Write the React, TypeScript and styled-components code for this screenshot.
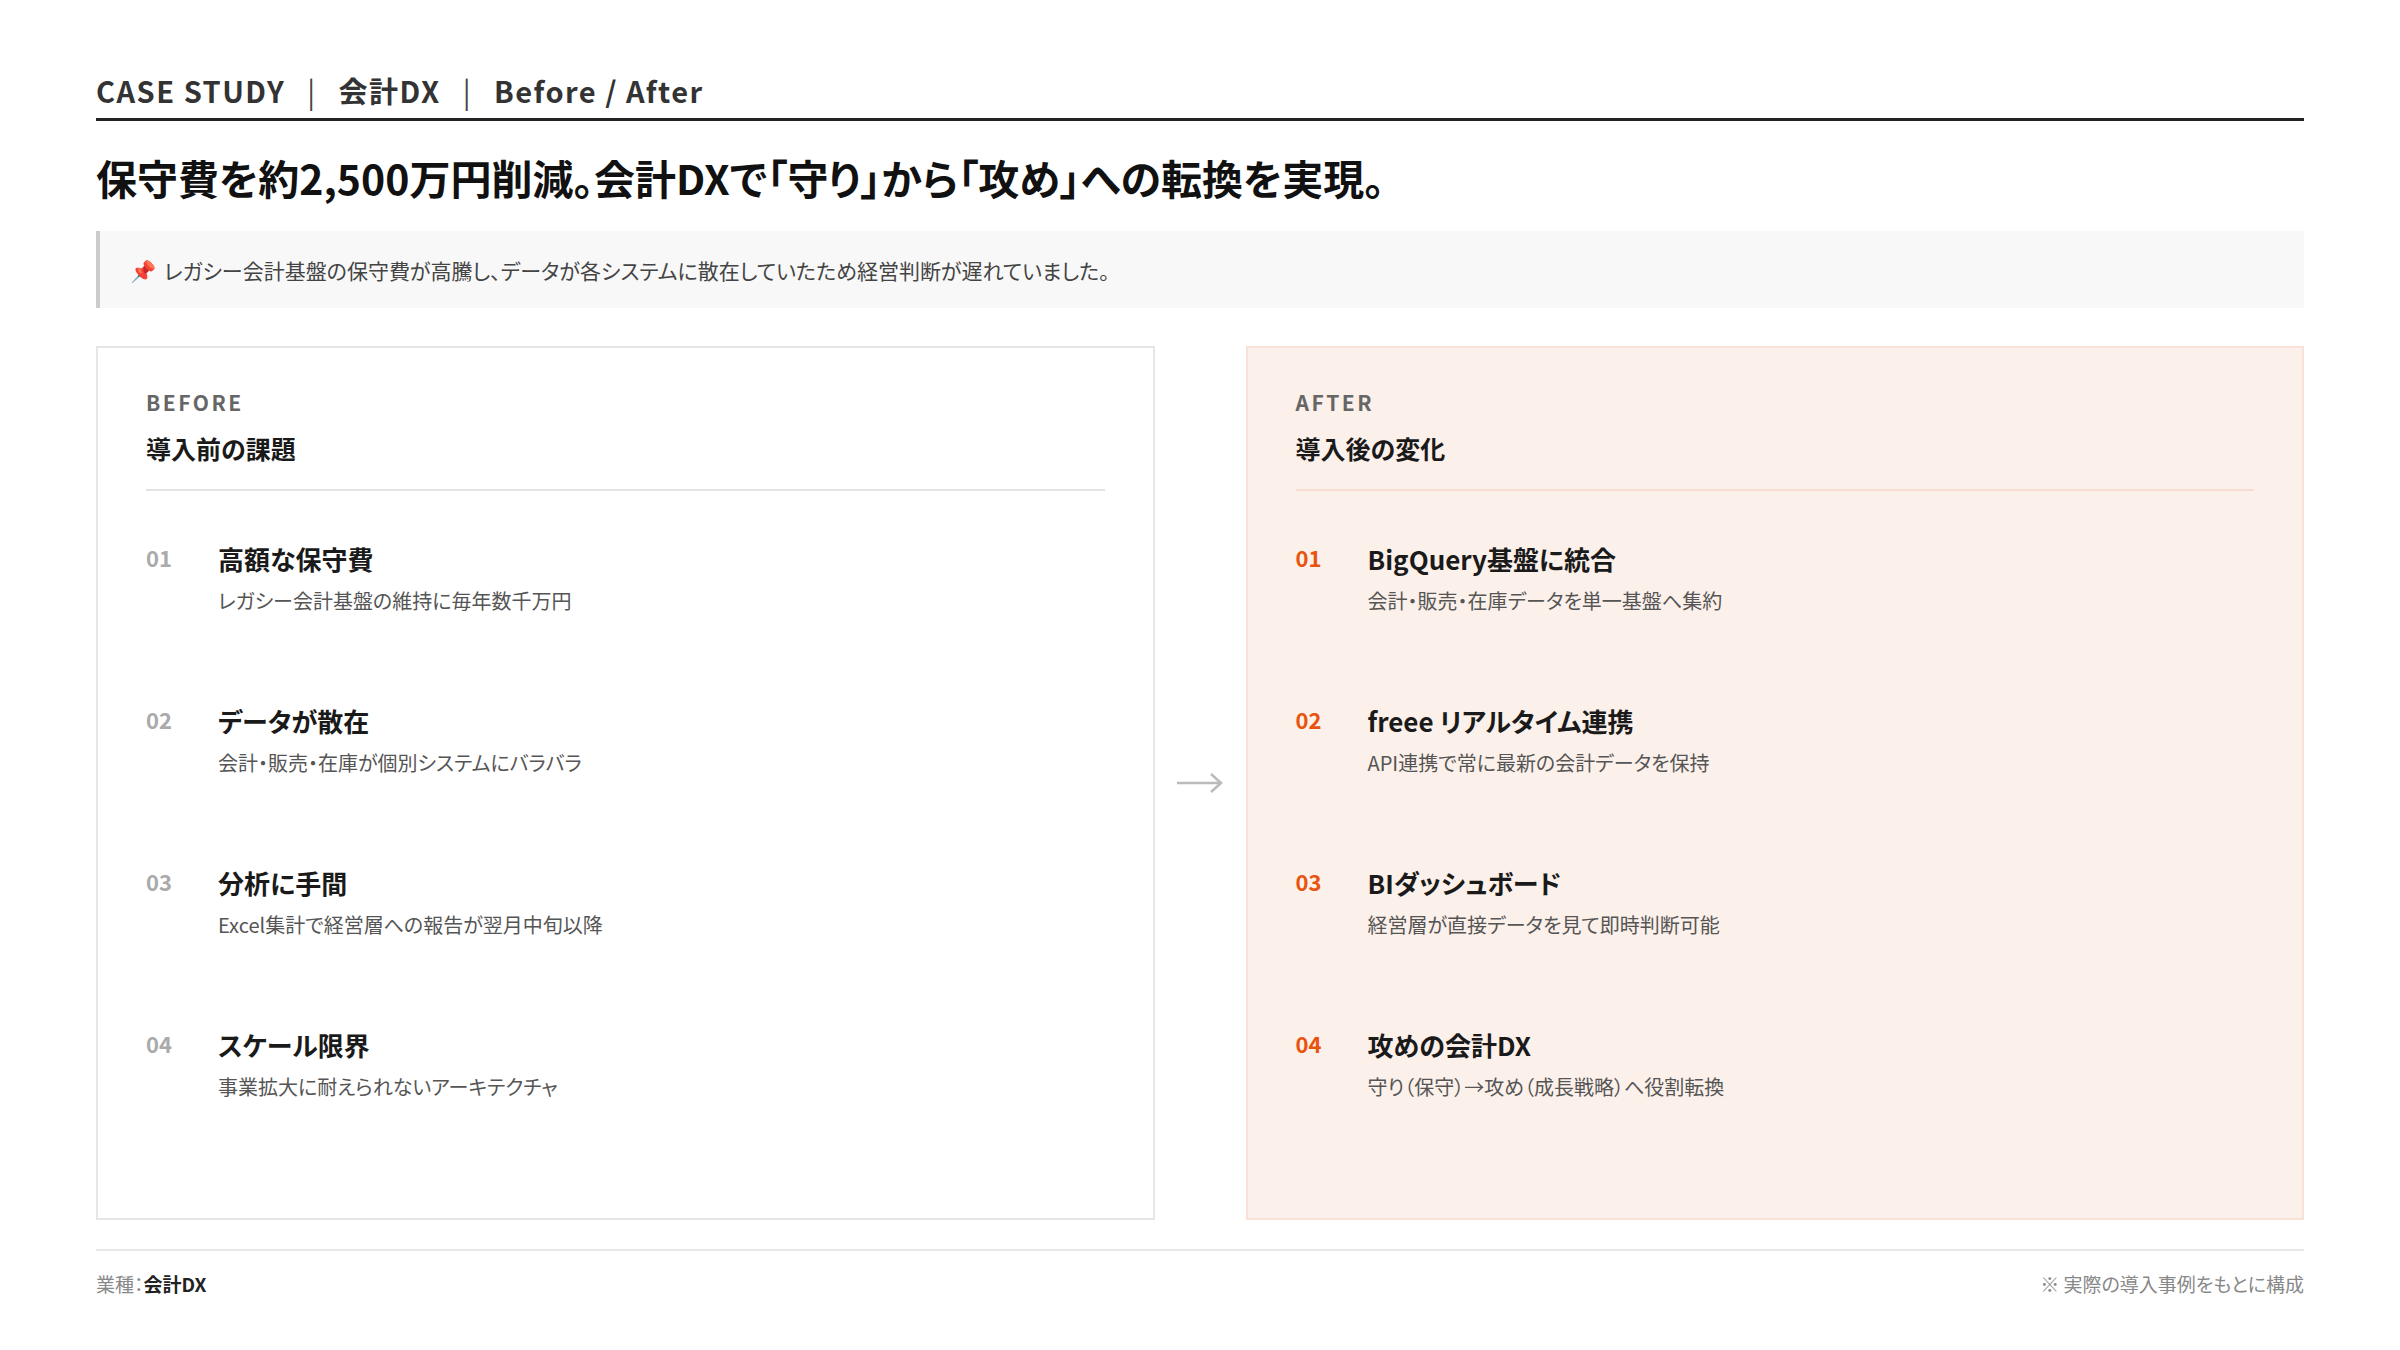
import React from "react";
import styled, { createGlobalStyle } from "styled-components";

const Global = createGlobalStyle`
  html, body { margin: 0; padding: 0; background: #fff; }
  body { font-family: "Noto Sans CJK JP", "Noto Sans", sans-serif; color: #222; font-feature-settings: "palt"; }
`;

const Page = styled.div`
  width: 2400px; height: 1350px; box-sizing: border-box;
  padding: 70px 96px 0; display: flex; flex-direction: column;
`;
const Header = styled.div`
  display: flex; align-items: center; gap: 22px; height: 40px;
  padding-bottom: 8px; border-bottom: 3px solid #222;
  font-size: 29px; font-weight: 700; color: #333; letter-spacing: 1.5px;
`;
const Sep = styled.span` font-weight: 400; color: #444; `;
const Title = styled.h1`
  margin: 28px 0 0; font-size: 41px; line-height: 56px; font-weight: 700; color: #111;
`;
const Callout = styled.div`
  margin-top: 26px; height: 77px; background: #f8f8f8; border-left: 4px solid #ccc;
  display: flex; align-items: center; gap: 8px; padding-left: 30px;
  font-size: 21px; color: #444;
`;
const Panels = styled.div`
  margin-top: 38px; height: 874px; display: grid;
  grid-template-columns: 1fr 91px 1fr;
`;
const Panel = styled.div<{ $after?: boolean }>`
  box-sizing: border-box; padding: 41px 48px 0;
  background: ${p => (p.$after ? "#fcf0ea" : "#fff")};
  border: 2px solid ${p => (p.$after ? "#f8e2d8" : "#e6e6e6")};
`;
const Label = styled.div`
  font-size: 21px; line-height: 26px; font-weight: 700; letter-spacing: 2.5px; color: #666;
`;
const Sub = styled.div<{ $after?: boolean }>`
  margin-top: 16px; font-size: 25px; line-height: 34px; font-weight: 700; color: #1a1a1a;
  padding-bottom: 24px; border-bottom: 2px solid ${p => (p.$after ? "#f7ddd2" : "#e4e4e4")};
`;
const Items = styled.div` display: flex; flex-direction: column; gap: 88px; margin-top: 50px; `;
const Item = styled.div` display: flex; `;
const Num = styled.div<{ $after?: boolean }>`
  width: 72px; flex: none; font-size: 22px; line-height: 32px; font-weight: 700;
  color: ${p => (p.$after ? "#e8530e" : "#aaa")};
`;
const ItemTitle = styled.div` font-size: 26px; line-height: 36px; font-weight: 700; color: #1a1a1a; `;
const ItemDesc = styled.div` margin-top: 10px; font-size: 20px; line-height: 28px; color: #555; `;
const ArrowCol = styled.div` display: flex; align-items: center; justify-content: center; `;
const Footer = styled.div`
  margin-top: 29px; border-top: 2px solid #e8e8e8; padding-top: 20px;
  display: flex; justify-content: space-between; font-size: 19px; line-height: 26px; color: #888;
`;
const Strong = styled.b` color: #222; `;

const before = [
  ["高額な保守費", "レガシー会計基盤の維持に毎年数千万円"],
  ["データが散在", "会計・販売・在庫が個別システムにバラバラ"],
  ["分析に手間", "Excel集計で経営層への報告が翌月中旬以降"],
  ["スケール限界", "事業拡大に耐えられないアーキテクチャ"],
];
const after = [
  ["BigQuery基盤に統合", "会計・販売・在庫データを単一基盤へ集約"],
  ["freee リアルタイム連携", "API連携で常に最新の会計データを保持"],
  ["BIダッシュボード", "経営層が直接データを見て即時判断可能"],
  ["攻めの会計DX", "守り（保守）→攻め（成長戦略）へ役割転換"],
];

const PanelView = ({ a, label, sub, items }: { a?: boolean; label: string; sub: string; items: string[][] }) => (
  <Panel $after={a}>
    <Label>{label}</Label>
    <Sub $after={a}>{sub}</Sub>
    <Items>
      {items.map((it, i) => (
        <Item key={i}>
          <Num $after={a}>{`0${i + 1}`}</Num>
          <div>
            <ItemTitle>{it[0]}</ItemTitle>
            <ItemDesc>{it[1]}</ItemDesc>
          </div>
        </Item>
      ))}
    </Items>
  </Panel>
);

export default function App() {
  return (
    <Page>
      <Global />
      <Header>
        <span>CASE STUDY</span><Sep>|</Sep><span>会計DX</span><Sep>|</Sep><span>Before / After</span>
      </Header>
      <Title>保守費を約2,500万円削減。会計DXで「守り」から「攻め」への転換を実現。</Title>
      <Callout>
        <span>📌</span>
        <span>レガシー会計基盤の保守費が高騰し、データが各システムに散在していたため経営判断が遅れていました。</span>
      </Callout>
      <Panels>
        <PanelView label="BEFORE" sub="導入前の課題" items={before} />
        <ArrowCol>
          <svg width="50" height="24" viewBox="0 0 50 24" fill="none" stroke="#bbb" strokeWidth="2.5">
            <path d="M2 12 H46 M36 3 L46 12 L36 21" />
          </svg>
        </ArrowCol>
        <PanelView a label="AFTER" sub="導入後の変化" items={after} />
      </Panels>
      <Footer>
        <span>業種：<Strong>会計DX</Strong></span>
        <span>※ 実際の導入事例をもとに構成</span>
      </Footer>
    </Page>
  );
}
